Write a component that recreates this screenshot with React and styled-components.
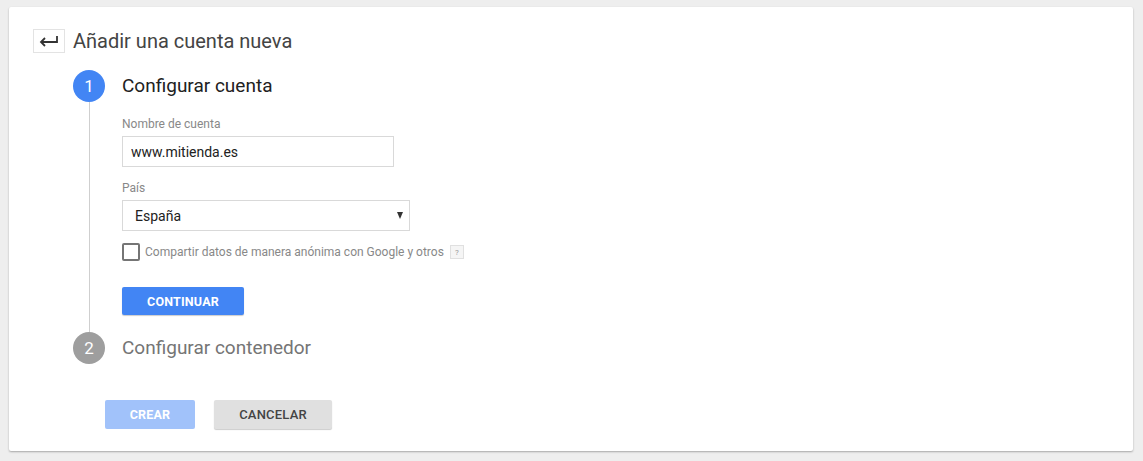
import React from 'react';
import styled, { createGlobalStyle } from 'styled-components';

const Global = createGlobalStyle`
  body {
    margin: 0;
    background: #eeeeee;
    font-family: Roboto, "Liberation Sans", Arial, sans-serif;
  }
`;

const Page = styled.div`
  padding: 7px 10px 9px 9px;
`;

const Card = styled.div`
  background: #fff;
  border-radius: 2px;
  box-shadow: 0 1px 2px rgba(0, 0, 0, 0.3);
  height: 444px;
  box-sizing: border-box;
  padding: 22px 24px 0 24px;
`;

const Header = styled.div`
  display: flex;
  align-items: center;
  gap: 8px;
`;

const BackButton = styled.button`
  width: 32px;
  height: 24px;
  border: 1px solid #e3e3e3;
  background: #fff;
  padding: 0;
  display: flex;
  align-items: center;
  justify-content: center;
  cursor: pointer;
`;

const Title = styled.h1`
  margin: 0;
  font-size: 20px;
  font-weight: 400;
  color: #444;
  line-height: 24px;
`;

const Steps = styled.div`
  margin-top: 17px;
  padding-left: 40px;
`;

const Step = styled.div`
  display: grid;
  grid-template-columns: 32px 1fr;
  column-gap: 17px;
`;

const Rail = styled.div`
  display: flex;
  flex-direction: column;
  align-items: center;
`;

const Circle = styled.div`
  width: 32px;
  height: 32px;
  border-radius: 50%;
  background: ${p => (p.$active ? '#4285f4' : '#9e9e9e')};
  color: #fff;
  font-size: 17px;
  display: flex;
  align-items: center;
  justify-content: center;
  flex-shrink: 0;
`;

const Line = styled.div`
  width: 1px;
  flex: 1;
  background: #cfcfcf;
`;

const StepTitle = styled.div`
  font-size: 19px;
  line-height: 32px;
  color: ${p => (p.$active ? '#212121' : '#757575')};
`;

const Body = styled.div`
  padding: 14px 0 17px;
`;

const Label = styled.div`
  font-size: 12px;
  color: #888;
  line-height: 16px;
  margin-bottom: 4px;
`;

const Input = styled.input`
  display: block;
  width: 272px;
  height: 31px;
  box-sizing: border-box;
  border: 1px solid #d9d9d9;
  padding: 0 8px;
  font-family: inherit;
  font-size: 14px;
  color: #212121;
  outline: none;
  margin-bottom: 13px;
`;

const SelectBox = styled.div`
  position: relative;
  width: 288px;
  height: 31px;
  box-sizing: border-box;
  border: 1px solid #d9d9d9;
  display: flex;
  align-items: center;
  padding: 0 12px;
  font-size: 14px;
  color: #212121;
`;

const Caret = styled.span`
  position: absolute;
  right: 6px;
  top: 11px;
  width: 0;
  height: 0;
  border-left: 3.5px solid transparent;
  border-right: 3.5px solid transparent;
  border-top: 7px solid #333;
`;

const CheckRow = styled.label`
  display: flex;
  align-items: center;
  margin-top: 12px;
  font-size: 12px;
  color: #888;
`;

const Box = styled.span`
  width: 18px;
  height: 18px;
  box-sizing: border-box;
  border: 2px solid #757575;
  border-radius: 2px;
  margin-right: 5px;
`;

const Help = styled.span`
  width: 12px;
  height: 12px;
  border: 1px solid #e0e0e0;
  background: #f5f5f5;
  font-size: 8px;
  color: #999;
  display: inline-flex;
  align-items: center;
  justify-content: center;
  margin-left: 6px;
`;

const Button = styled.button`
  height: ${p => p.$h || 28}px;
  padding: 0;
  width: ${p => p.$w}px;
  border: none;
  border-radius: 2px;
  font-family: inherit;
  font-size: ${p => (p.$light ? 13 : 12.5)}px;
  font-weight: ${p => (p.$light ? 500 : 700)};
  letter-spacing: 0.2px;
  background: ${p => p.$bg};
  color: ${p => p.$color};
  box-shadow: ${p => (p.$flat ? 'none' : '0 1px 1px rgba(0,0,0,0.2)')};
  cursor: pointer;
`;

const ContinueWrap = styled.div`
  margin-top: 26px;
`;

const Footer = styled.div`
  display: flex;
  gap: 19px;
  margin-top: 36px;
  padding-left: 72px;
`;

export default function App() {
  return (
    <>
      <Global />
      <Page>
        <Card>
          <Header>
            <BackButton aria-label="Volver">
              <svg width="22" height="14" viewBox="0 0 22 14">
                <path d="M19 2 V8 H3" fill="none" stroke="#333" strokeWidth="1.8" />
                <path d="M7 4 L3 8 L7 12" fill="none" stroke="#333" strokeWidth="1.8" />
              </svg>
            </BackButton>
            <Title>Añadir una cuenta nueva</Title>
          </Header>
          <Steps>
            <Step>
              <Rail>
                <Circle $active>1</Circle>
                <Line />
              </Rail>
              <div>
                <StepTitle $active>Configurar cuenta</StepTitle>
                <Body>
                  <Label>Nombre de cuenta</Label>
                  <Input defaultValue="www.mitienda.es" />
                  <Label>País</Label>
                  <SelectBox>
                    España
                    <Caret />
                  </SelectBox>
                  <CheckRow>
                    <Box />
                    Compartir datos de manera anónima con Google y otros
                    <Help>?</Help>
                  </CheckRow>
                  <ContinueWrap>
                    <Button $w={122} $bg="#4285f4" $color="#fff">CONTINUAR</Button>
                  </ContinueWrap>
                </Body>
              </div>
            </Step>
            <Step>
              <Rail>
                <Circle>2</Circle>
              </Rail>
              <StepTitle>Configurar contenedor</StepTitle>
            </Step>
          </Steps>
          <Footer>
            <Button $w={90} $h={29} $bg="#a1c2fa" $color="#fff" $flat>CREAR</Button>
            <Button $w={118} $h={29} $bg="#e0e0e0" $color="#444" $light>CANCELAR</Button>
          </Footer>
        </Card>
      </Page>
    </>
  );
}
